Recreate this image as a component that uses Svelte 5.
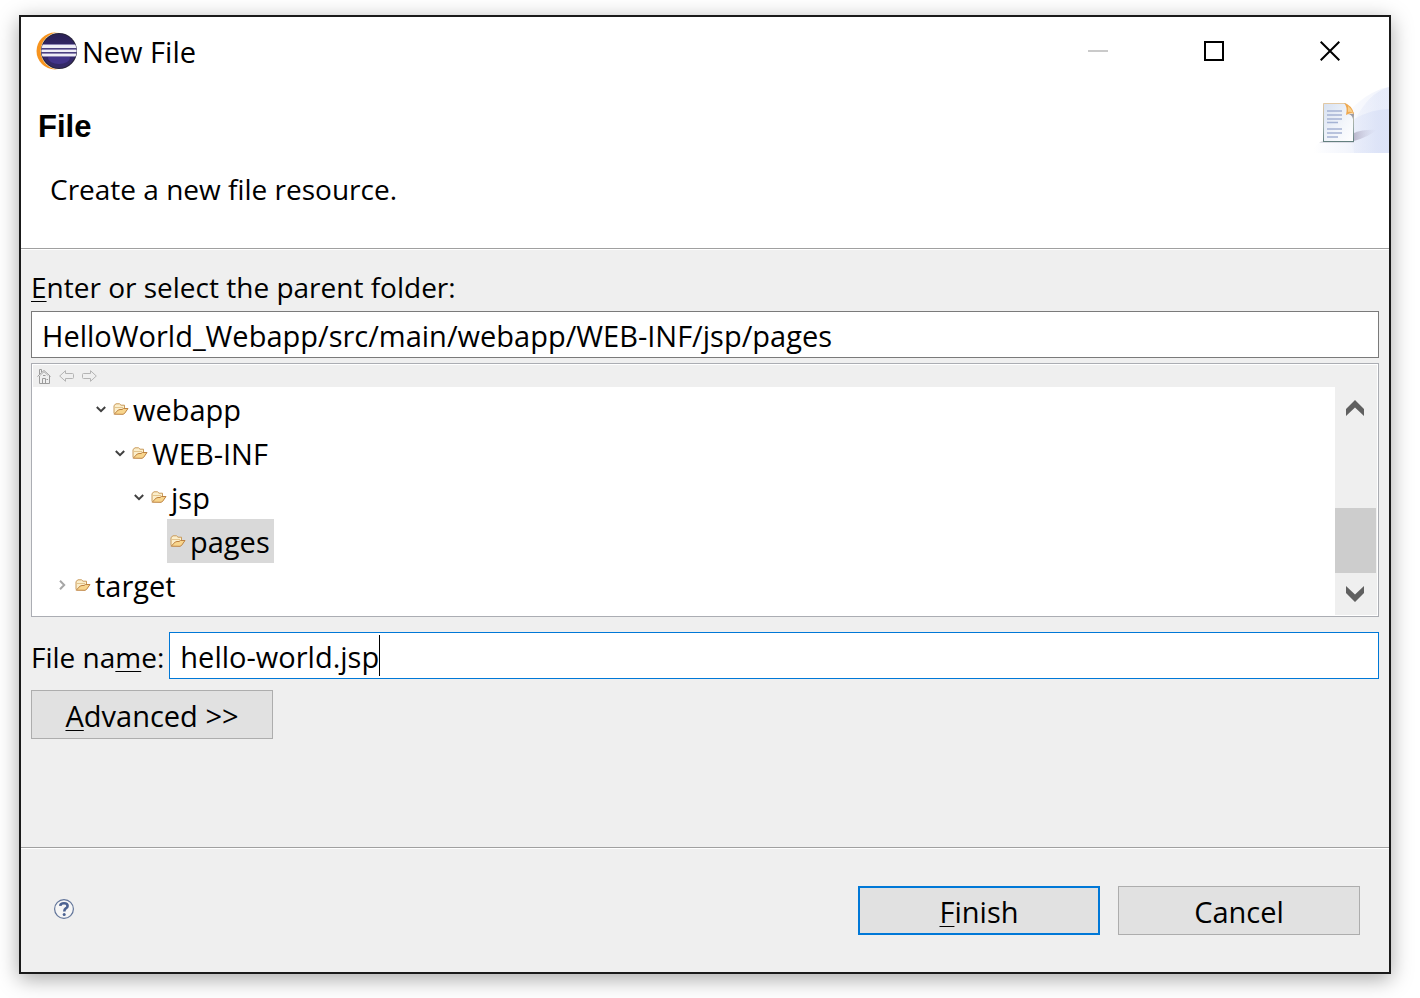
<script>
  let folder = $state('HelloWorld_Webapp/src/main/webapp/WEB-INF/jsp/pages');
  let fileName = $state('hello-world.jsp');
  let selected = $state('pages');

  const nodes = [
    { name: 'webapp', depth: 3, state: 'open' },
    { name: 'WEB-INF', depth: 4, state: 'open' },
    { name: 'jsp', depth: 5, state: 'open' },
    { name: 'pages', depth: 6, state: 'leaf' },
    { name: 'target', depth: 1, state: 'closed' }
  ];
</script>

<main class="window">
  <header class="titlebar">
    <svg class="logo" width="42" height="38" viewBox="0 0 42 38" aria-hidden="true">
      <defs>
        <linearGradient id="orb" x1="0" y1="0" x2="0" y2="1">
          <stop offset="0" stop-color="#2a2055" />
          <stop offset="0.5" stop-color="#35286c" />
          <stop offset="1" stop-color="#332a66" />
        </linearGradient>
        <clipPath id="disc"><circle cx="23" cy="19" r="17.5" /></clipPath>
      </defs>
      <circle cx="19" cy="19" r="18.5" fill="#f7941e" />
      <circle cx="23.5" cy="19" r="18.8" fill="#fff" />
      <circle cx="23" cy="19" r="18" fill="#262238" />
      <circle cx="23" cy="19" r="17" fill="url(#orb)" />
      <ellipse cx="23" cy="26" rx="11" ry="6" fill="#43358a" />
      <g clip-path="url(#disc)">
        <rect x="5" y="12" width="36" height="13" fill="#8d85b4" />
        <rect x="5" y="13" width="36" height="3" fill="#efeef6" />
        <rect x="5" y="16" width="36" height="1" fill="#4b4080" />
        <rect x="5" y="18" width="36" height="2" fill="#efeef6" />
        <rect x="5" y="20" width="36" height="1" fill="#4b4080" />
        <rect x="5" y="22" width="36" height="2" fill="#efeef6" />
      </g>
    </svg>
    <h1>New File</h1>
    <div class="controls">
      <button aria-label="Minimize" disabled>
        <svg width="20" height="20" viewBox="0 0 20 20"><rect y="9" width="20" height="2" fill="#cacaca" /></svg>
      </button>
      <button aria-label="Maximize">
        <svg width="20" height="20" viewBox="0 0 20 20"><rect x="1" y="1" width="18" height="18" fill="none" stroke="#000" stroke-width="2" /></svg>
      </button>
      <button aria-label="Close">
        <svg width="20" height="20" viewBox="0 0 20 20"><path d="M.7.7 19.3 19.3M19.3.7.7 19.3" fill="none" stroke="#000" stroke-width="2" /></svg>
      </button>
    </div>
  </header>

  <section class="banner">
    <div class="intro">
      <h2>File</h2>
      <p>Create a new file resource.</p>
    </div>
    <svg class="art" width="75" height="66" viewBox="0 0 75 66" aria-hidden="true">
      <defs>
        <linearGradient id="wave" gradientUnits="userSpaceOnUse" x1="0" y1="0" x2="75" y2="0">
          <stop offset="0" stop-color="#dde4f7" stop-opacity="0" />
          <stop offset="0.4" stop-color="#e6ebf9" stop-opacity="0.5" />
          <stop offset="0.85" stop-color="#dbe2f7" />
        </linearGradient>
        <linearGradient id="sheet" x1="0" y1="0" x2="1" y2="1">
          <stop offset="0" stop-color="#d7e1f1" />
          <stop offset="0.6" stop-color="#f3f6fb" />
          <stop offset="1" stop-color="#fff" />
        </linearGradient>
        <linearGradient id="edge" x1="0" y1="0" x2="0" y2="1">
          <stop offset="0" stop-color="#e3c9a4" />
          <stop offset="0.6" stop-color="#9dadab" />
          <stop offset="1" stop-color="#5f7c7c" />
        </linearGradient>
        <linearGradient id="shade" x1="0" y1="0" x2="1" y2="0">
          <stop offset="0" stop-color="#a5a0b8" stop-opacity="0.7" />
          <stop offset="1" stop-color="#c9c9e0" stop-opacity="0" />
        </linearGradient>
      </defs>
      <path d="M30 30Q52 4 75 0V66H40Z" fill="url(#wave)" opacity="0.35" />
      <path d="M40 35Q54 6 75 0V66H40Z" fill="url(#wave)" opacity="0.45" />
      <path d="M0 66V60Q20 42 40 32Q58 22 75 22V66Z" fill="url(#wave)" opacity="0.85" />
      <path d="M40 54Q54 50 63 43Q50 42 40 46Z" fill="url(#shade)" />
      <path d="M5 56H40V54H8Z" fill="#c3c3cf" opacity="0.5" />
      <g transform="translate(1 0)">
        <path d="M8.500 16.500H31L38.500 26V54.500H8.500Z" fill="url(#sheet)" stroke="url(#edge)" />
        <path d="M8 54.500H39" stroke="#64807f" />
        <path d="M32 27Q37 27 38 32L39 27Z" fill="#9a9aa6" />
        <path d="M29 16Q37 18 39 27Q36 25 31 28Q33 20 29 16Z" fill="#efa951" />
        <path d="M33 19Q37 22 38 26Q35 24 33 25Z" fill="#f9d08f" />
        <g stroke="#a5b3d4" stroke-width="1.500">
          <path d="M12 24H27M12 28H27M12 32H27M12 35.500H23M12 42H27M12 46H27M12 50H23" />
        </g>
      </g>
    </svg>
  </section>

  <section class="body">
    <label class="caption" for="folder"><u>E</u>nter or select the parent folder:</label>
    <input id="folder" class="field" type="text" bind:value={folder} spellcheck="false" />

    <div class="browser">
      <div class="tools">
        <button aria-label="Home">
          <svg width="14" height="16" viewBox="0 0 14 16" fill="none" stroke="#9b9b9b">
            <path d="M2.500 8V15.500H12.500V8M.5 8.500 7 2.500 13.500 8.500M2.500 6V1.500H4.500V4" />
            <path d="M3 7.500 7 4 11 7.500" stroke="#c0c0c0" />
            <path d="M5.500 15V10.500H8.500V15M6 7.500H8.500M9.500 11.500H11" />
          </svg>
        </button>
        <button aria-label="Back">
          <svg width="15" height="12" viewBox="0 0 15 12" fill="none" stroke="#b4b4b4">
            <path d="M.7 6 6.500.7V3.500H13.500Q14.500 3.500 14.500 4.500V7.500Q14.500 8.500 13.500 8.500H6.500V11.300Z" />
          </svg>
        </button>
        <button aria-label="Forward">
          <svg width="15" height="12" viewBox="0 0 15 12" fill="none" stroke="#b4b4b4">
            <path d="M14.300 6 8.500.7V3.500H1.500Q.5 3.500.5 4.500V7.500Q.5 8.500 1.500 8.500H8.500V11.300Z" />
          </svg>
        </button>
      </div>
      <div class="pane">
        <ul class="tree" role="tree" aria-label="Parent folder">
          {#each nodes as node}
            <li role="treeitem" aria-selected={selected === node.name} style="--depth: {node.depth}">
              <span class="twist">
                {#if node.state === 'open'}
                  <svg width="10" height="7" viewBox="0 0 10 7"><path d="M.8 1 5 5.200 9.200 1" fill="none" stroke="#404040" stroke-width="2" /></svg>
                {:else if node.state === 'closed'}
                  <svg width="7" height="10" viewBox="0 0 7 10"><path d="M1 .8 5.200 5 1 9.200" fill="none" stroke="#a6a6a6" stroke-width="2" /></svg>
                {/if}
              </span>
              <button class="node" class:selected={selected === node.name} onclick={() => (selected = node.name)}>
                <svg width="16" height="12" viewBox="0 0 16 12" aria-hidden="true">
                  <path d="M1 10.500V2.500L3 .8H6.500L8 2.200H11.500V5" fill="#fbeecb" stroke="#c99a5b" />
                  <path d="M2 4.500H10" stroke="#e3c48c" />
                  <path d="M1.200 11.200 5.200 7 7 6.500H9L10.500 5.500H15L11.500 10.500 10 11.300Z" fill="#f8d58c" stroke="#bd8241" stroke-linejoin="round" />
                </svg>
                <span>{node.name}</span>
              </button>
            </li>
          {/each}
        </ul>
        <div class="scroll">
          <button aria-label="Scroll up">
            <svg width="18" height="16" viewBox="0 0 18 16"><path d="M9 0 18 9V16L9 7.500 0 16V9Z" fill="#606060" /></svg>
          </button>
          <div class="track"><div class="thumb"></div></div>
          <button aria-label="Scroll down">
            <svg width="18" height="16" viewBox="0 0 18 16"><path d="M9 16 18 7V0L9 8.500 0 0V7Z" fill="#606060" /></svg>
          </button>
        </div>
      </div>
    </div>

    <div class="name-row">
      <label for="filename">File na<u>m</u>e:</label>
      <div class="field active">
        <input id="filename" type="text" bind:value={fileName} spellcheck="false" />
        <span class="caret"></span>
      </div>
    </div>

    <button class="push"><span><u>A</u>dvanced &gt;&gt;</span></button>
  </section>

  <footer>
    <button class="help" aria-label="Help">
      <svg width="20" height="20" viewBox="0 0 20 20" fill="none">
        <circle cx="10" cy="10" r="9.400" fill="#f6f6f6" stroke="#62759a" stroke-width="1.200" />
        <path d="M6.200 6.800Q6.500 4.200 10 4.200Q13.600 4.200 13.600 6.900Q13.600 8.300 11.800 9.300Q10.300 10.300 10.300 12.600" stroke="#4c6291" stroke-width="2.600" />
        <circle cx="10.200" cy="15.400" r="1.500" fill="#4c6291" />
      </svg>
    </button>
    <div class="actions">
      <button class="push default"><span><u>F</u>inish</span></button>
      <button class="push"><span>Cancel</span></button>
    </div>
  </footer>
</main>

<style>
  :global(body) {
    background: #fff;
  }

  .window,
  .window * {
    box-sizing: border-box;
  }

  .window {
    display: flex;
    flex-direction: column;
    min-height: calc(100vh - 39px);
    margin: 15px 29px 24px 19px;
    border: 2px solid #1a1a1a;
    background: #efefef;
    box-shadow: 0 5px 20px rgba(0, 0, 0, 0.35);
    color: #000;
    font: 400 29px/44px 'Segoe UI', 'Open Sans', sans-serif;
  }

  button {
    margin: 0;
    padding: 0;
    border: 0;
    background: none;
    color: inherit;
    font: inherit;
  }

  svg {
    display: block;
    flex: none;
  }

  u {
    text-decoration-thickness: 1px;
    text-underline-offset: 3px;
    text-decoration-skip-ink: none;
  }

  h1,
  h2,
  p {
    margin: 0;
    font-weight: 400;
    font-size: inherit;
  }

  label,
  p {
    font-size: 28px;
  }

  .titlebar {
    display: flex;
    align-items: center;
    gap: 4px;
    height: 68px;
    padding: 0 1px 0 15px;
    background: #fff;
  }

  .titlebar h1 {
    padding-top: 2px;
  }

  .controls {
    display: flex;
    align-self: stretch;
    margin-left: auto;
  }

  .controls button {
    display: grid;
    place-items: center;
    width: 116px;
  }

  .banner {
    display: flex;
    justify-content: space-between;
    align-items: flex-start;
    padding: 2px 0 37px 17px;
    background: #fff;
    border-bottom: 1px solid #a0a0a0;
  }

  .intro {
    display: grid;
    gap: 18px;
    padding-top: 18px;
  }

  .intro h2 {
    font: 700 31px/44px 'Liberation Sans', Arial, sans-serif;
  }

  .intro p {
    padding-left: 12px;
  }

  .body {
    display: flex;
    flex: 1;
    flex-direction: column;
    padding: 15px 10px;
    border-top: 1px solid #fff;
  }

  .caption {
    margin-bottom: 2px;
  }

  .field {
    width: 100%;
    height: 47px;
    padding: 2px 10px 0;
    border: 1px solid #7a7a7a;
    border-radius: 0;
    outline: 0;
    background: #fff;
    color: inherit;
    font: inherit;
  }

  .browser {
    margin-top: 5px;
    padding: 1px;
    border: 1px solid #abadb3;
    background: #fff;
  }

  .tools {
    display: flex;
    align-items: center;
    gap: 8px;
    height: 22px;
    padding-left: 4px;
    background: #efefef;
  }

  .pane {
    display: flex;
  }

  .tree {
    flex: 1;
    margin: 0;
    padding: 0 0 8px;
    list-style: none;
  }

  .tree li {
    display: flex;
    padding-left: calc(1px + var(--depth) * 19px);
  }

  .twist {
    display: grid;
    place-items: center;
    width: 19px;
  }

  .node {
    display: flex;
    align-items: center;
    gap: 4px;
    height: 44px;
    padding: 0 4px 0 3px;
  }

  .node span {
    padding-top: 2px;
  }

  .selected {
    background: #d9d9d9;
  }

  .scroll {
    display: flex;
    flex-direction: column;
    width: 42px;
    background: #efefef;
  }

  .scroll button {
    display: grid;
    place-items: center;
    height: 42px;
    padding-right: 2px;
  }

  .track {
    display: flex;
    flex: 1;
    flex-direction: column;
    justify-content: flex-end;
  }

  .thumb {
    height: 45%;
    margin-right: 1px;
    background: #cdcdcd;
  }

  .name-row {
    display: flex;
    align-items: center;
    gap: 5px;
    margin: 15px 0 11px;
  }

  .name-row label {
    flex: none;
    padding-top: 2px;
  }

  .active {
    display: flex;
    align-items: center;
    padding-top: 0;
    border-color: #0078d7;
  }

  .active input {
    field-sizing: content;
    height: 44px;
    padding: 2px 0 0;
    border: 0;
    outline: 0;
    background: none;
    color: inherit;
    font: inherit;
    caret-color: transparent;
  }

  .caret {
    width: 1px;
    height: 41px;
    background: #000;
  }

  .push {
    display: grid;
    place-items: center;
    width: 242px;
    height: 49px;
    padding-top: 2px;
    border: 1px solid #adadad;
    background: #e1e1e1;
  }

  .default {
    border: 2px solid #0078d7;
  }

  footer {
    display: flex;
    align-items: center;
    justify-content: space-between;
    padding: 38px 29px 37px 33px;
    border-top: 1px solid #a0a0a0;
    box-shadow: inset 0 1px #fff;
  }

  .help {
    padding-bottom: 3px;
  }

  .actions {
    display: flex;
    gap: 18px;
  }
</style>
